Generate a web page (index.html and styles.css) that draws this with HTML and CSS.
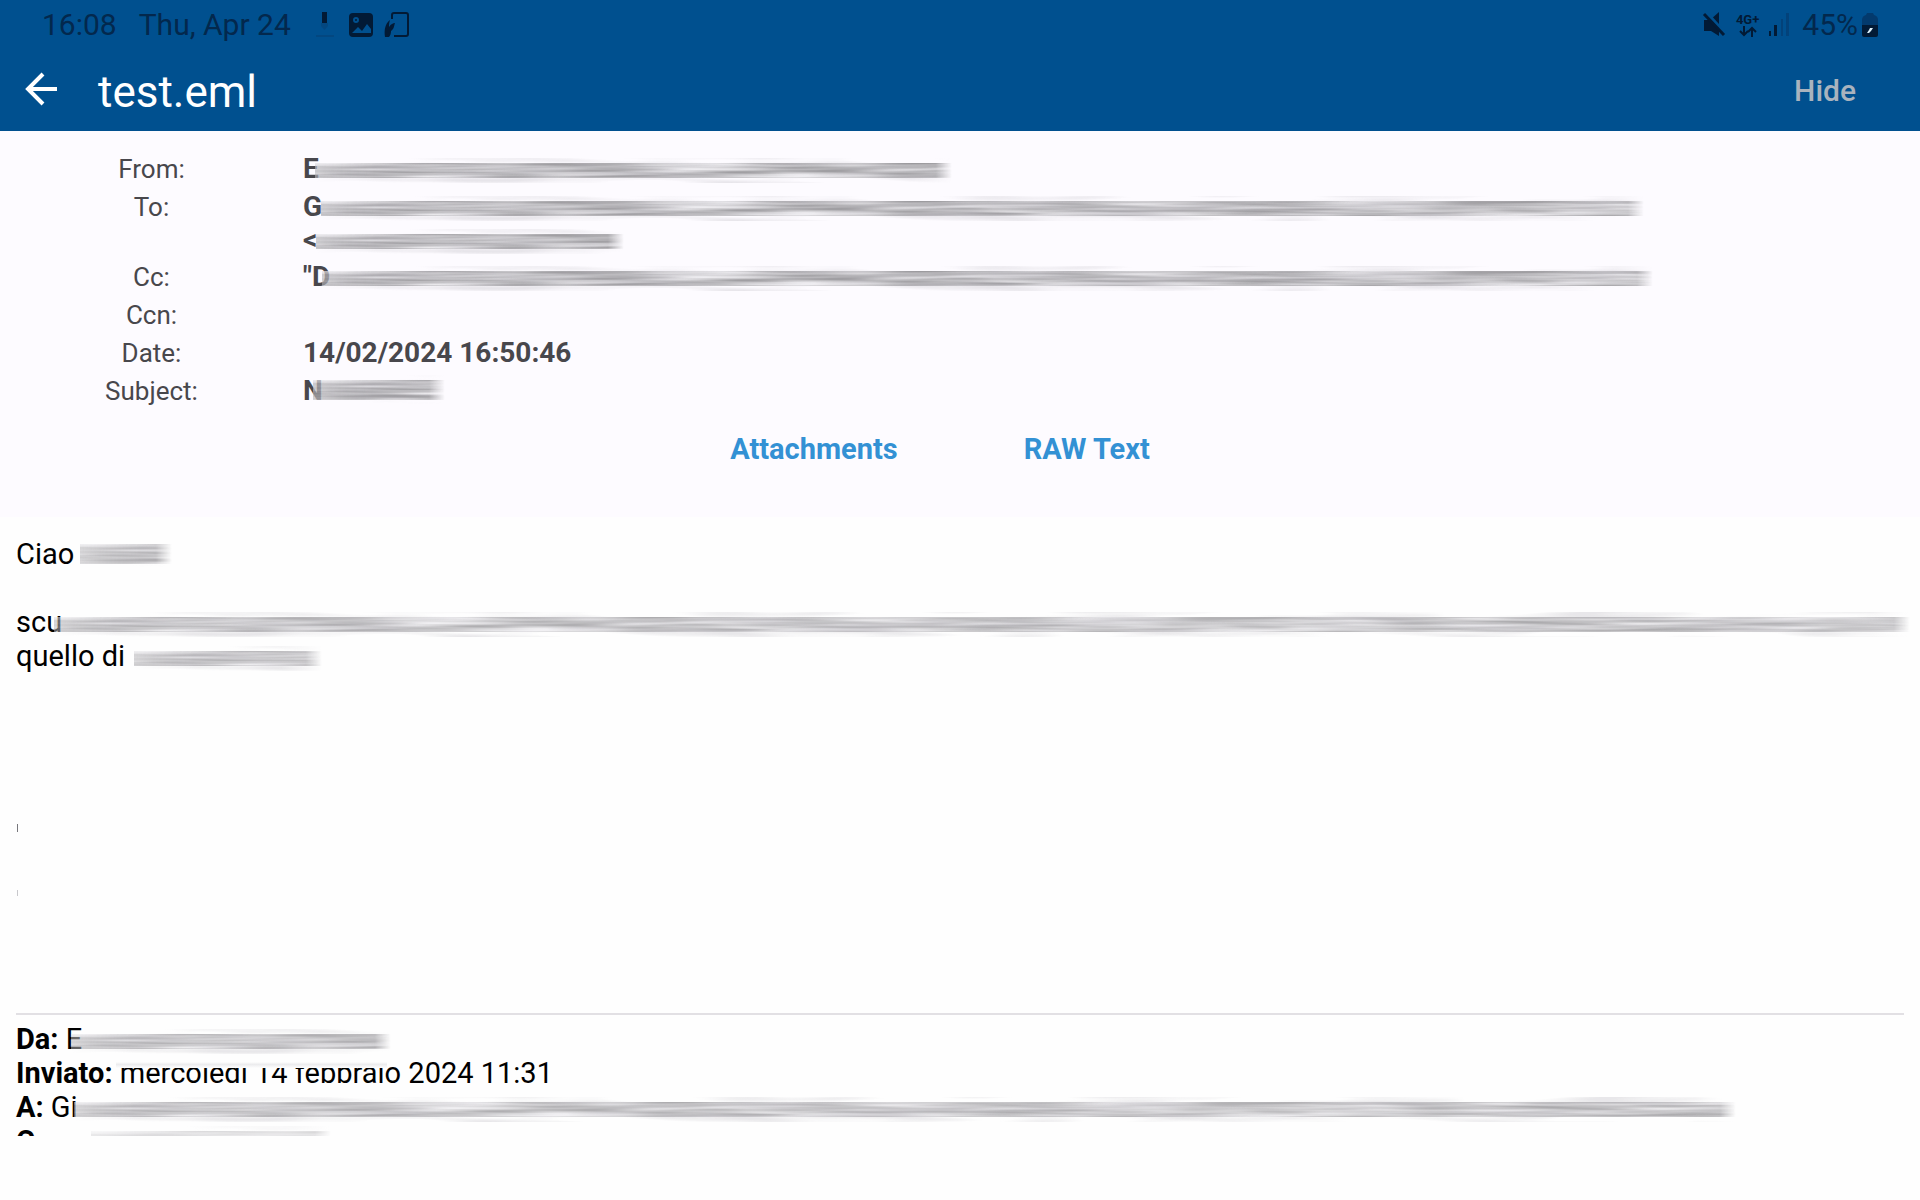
FILE: index.html
```html
<!DOCTYPE html>
<html lang="en">
<head>
  <meta charset="UTF-8">
  <meta name="viewport" content="width=device-width, initial-scale=1.0">
  <title>test.eml</title>
  <link rel="stylesheet" href="styles.css">
</head>
<body>
  <!-- filters for the smudged text -->
  <svg class="defs" width="0" height="0" aria-hidden="true">
    <filter id="streak" x="0" y="0" width="100%" height="100%" color-interpolation-filters="sRGB">
      <feTurbulence type="fractalNoise" baseFrequency="0.009 0.26" numOctaves="2" seed="4"/>
      <feColorMatrix values="0.6 0 0 0 0.43  0.6 0 0 0 0.425  0.6 0 0 0 0.44  0 0 0 0 1"/>
      <feComposite in2="SourceGraphic" operator="in"/>
    </filter>
    <filter id="halo" x="0" y="0" width="100%" height="100%" color-interpolation-filters="sRGB">
      <feTurbulence type="fractalNoise" baseFrequency="0.008 0.12" numOctaves="2" seed="9"/>
      <feColorMatrix values="0 0 0 0 0.72  0 0 0 0 0.71  0 0 0 0 0.74  3 0 0 0 -1.3"/>
      <feComposite in2="SourceGraphic" operator="in"/>
    </filter>
  </svg>

  <header class="top">
    <div class="status">
      <span class="clock">16:08</span>
      <span class="day">Thu, Apr 24</span>
      <svg class="ico" width="28" height="28" viewBox="0 0 28 28">
        <path d="M11 1h5v11h-5z" fill="#021a35"/>
        <path d="M10 12h7v3l-3.500 4-3.500-4z" fill="#034780"/>
        <path d="M5 25h18" stroke="#034780" stroke-width="2"/>
      </svg>
      <svg class="ico" width="28" height="28" viewBox="0 0 28 28">
        <rect x="2" y="2" width="24" height="24" rx="4" fill="#021a35"/>
        <circle cx="9" cy="9" r="2" fill="none" stroke="#00508f" stroke-width="2"/>
        <path d="M5 22l6-6 4 4 5-7 4 5v4z" fill="#00508f"/>
      </svg>
      <svg class="ico" width="28" height="28" viewBox="0 0 28 28">
        <path d="M9 8V4q0-2 2-2h12q2 0 2 2v19q0 2-2 2H11" fill="none" stroke="#021a35" stroke-width="2"/>
        <path d="M2 26c-1-7 0-13 5-17-1 3-1 5-1 7 2-3 4-4 6-4-1 3-1 6-4 8 0 3-1 5-2 6z" fill="#021a35"/>
      </svg>
      <div class="right">
        <svg class="mute" width="24" height="26" viewBox="0 0 24 26">
          <path d="M2 8h6l9-8v24l-8-5H2z" fill="#021a35"/>
          <path d="M5 1l19 21" stroke="#00508f" stroke-width="3"/>
          <path d="M2 2l20 21" stroke="#021a35" stroke-width="3"/>
        </svg>
        <span class="net">4G+
          <svg width="18" height="11" viewBox="0 0 18 11" fill="none" stroke="#021a35" stroke-width="2"><path d="M5 0v9M1 5l4 4 4-4M13 11V2M9 6l4-4 4 4"/></svg>
        </span>
        <svg class="signal" width="22" height="24" viewBox="0 0 22 24">
          <path d="M1 18h2v5H1zM6 12h3v11H6z" fill="#021a35"/>
          <path d="M13 6h2v17h-2zM18 0h3v23h-3z" fill="#03427a"/>
        </svg>
        <span class="pct">45%</span>
        <svg class="bat" width="16" height="25" viewBox="0 0 16 25">
          <path d="M0 12V7q0-4 4-5l1-2h6l1 2q4 1 4 5v5z" fill="#033a6d"/>
          <path d="M0 12h16v10q0 2-2 2H2q-2 0-2-2z" fill="#021a35"/>
          <path d="M5 20l2-3 1-2h3l-2 3-2 2z" fill="#dff2fb"/>
        </svg>
      </div>
    </div>
    <div class="bar">
      <button class="back" type="button" aria-label="Back">
        <svg width="34" height="34" viewBox="0 0 34 34" fill="none" stroke="#fff" stroke-width="4"><path d="M33 17H4M19 2L4 17l15 15"/></svg>
      </button>
      <h1>test.eml</h1>
      <button class="hide" type="button">Hide</button>
    </div>
  </header>

  <section class="info">
    <dl>
      <dt>From:</dt>
      <dd>E<span class="smear s-from"></span></dd>
      <dt>To:</dt>
      <dd>G<span class="smear s-to"></span><br>&lt;<span class="smear s-to2"></span></dd>
      <dt>Cc:</dt>
      <dd>"D<span class="smear s-cc"></span></dd>
      <dt>Ccn:</dt>
      <dd>&nbsp;</dd>
      <dt>Date:</dt>
      <dd>14/02/2024 16:50:46</dd>
      <dt>Subject:</dt>
      <dd>N<span class="smear tall s-subj"></span></dd>
    </dl>
    <div class="actions">
      <button type="button">Attachments</button>
      <button type="button">RAW Text</button>
    </div>
  </section>

  <main class="mail">
    <p>Ciao<span class="smear tall s-ciao"></span></p>
    <p class="empty"></p>
    <p>scu<span class="smear s-scu"></span></p>
    <p>quello di<span class="smear s-quello"></span></p>
    <div class="gap">
      <i class="speck"></i>
      <i class="speck light"></i>
    </div>
    <hr>
    <p><b>Da:</b> E<span class="smear s-da"></span></p>
    <p><b>Inviato:</b> <span class="cut">mercoledì 14 febbraio</span> 2024 11:31</p>
    <p><b>A:</b> Gi<span class="smear s-a"></span></p>
    <p><b>C</b><span class="smear tall s-c"></span></p>
  </main>
</body>
</html>
```
FILE: styles.css
```css
*{margin:0;padding:0;box-sizing:border-box;}
body{height:100vh;display:flex;flex-direction:column;background:#fefefe;font-family:Roboto,"Liberation Sans",sans-serif;overflow:hidden;}
button{border:0;background:none;font-family:inherit;cursor:pointer;}
.defs{position:absolute;}

/* status bar + title */
.top{background:#00508f;flex:none;}
.status{height:50px;padding:0 42px;display:flex;align-items:center;color:#03284d;font-size:30px;line-height:50px;}
.day{margin:0 20px 0 22px;}
.ico{margin-right:8px;flex:none;}
.right{margin-left:auto;display:flex;align-items:center;}
.net{display:flex;flex-direction:column;align-items:center;font-size:13px;line-height:13px;font-weight:700;color:#021a35;margin:0 9px 0 10px;}
.signal{margin-right:12px;}
.bat{margin-left:4px;}
.bar{height:81px;padding:0 64px 0 24px;display:flex;align-items:center;}
.back{width:34px;height:34px;margin-bottom:4px;}
.back svg{display:block;}
.bar h1{font-size:44px;line-height:52px;font-weight:400;color:#fff;margin-left:40px;padding-top:2px;}
.hide{margin-left:auto;font-size:30px;line-height:34px;font-weight:500;color:#a9b3be;}

/* mail headers */
.info{background:#fdfbff;padding:21px 0 51px;flex:none;}
.info dl{display:grid;grid-template-columns:303px 1fr;row-gap:4px;align-items:baseline;color:#48474c;line-height:33px;}
.info dt{text-align:center;font-size:26px;}
.info dd{font-size:28px;font-weight:700;white-space:nowrap;}
.actions{display:flex;justify-content:center;gap:126px;padding:24px 40px 0 0;}
.actions button{font-size:29px;line-height:34px;font-weight:700;color:#3391d4;}

/* message text */
.mail{flex:1;min-height:0;overflow:hidden;margin-bottom:64px;padding:20px 16px 0;color:#000;font-size:29px;line-height:34px;}
.mail p{height:34px;white-space:nowrap;}
.gap{height:340px;padding-top:151px;}
.speck{display:block;width:1px;height:8px;margin:0 0 58px 1px;background:#77777c;}
.speck.light{height:6px;background:#c8c8cc;}
.mail hr{border:0;height:2px;background:#e2e0e4;margin-bottom:7px;}
.cut{position:relative;}
.cut::before{content:"";position:absolute;left:-4px;right:14px;top:0;height:12px;background:linear-gradient(#fefefe 50%,#ececee 70%,#fefefe);}

/* smudges over private text */
.smear{display:inline-block;position:relative;height:15px;max-width:100%;}
.smear::before,.smear::after{content:"";position:absolute;left:0;right:0;background:#000;}
.smear::before{top:0;bottom:0;filter:url(#streak);-webkit-mask:linear-gradient(90deg,rgba(0,0,0,.8),#000 60px,#000 calc(100% - 16px),transparent);mask:linear-gradient(90deg,rgba(0,0,0,.8),#000 60px,#000 calc(100% - 16px),transparent);}
.smear::after{top:-5px;bottom:-5px;filter:url(#halo);opacity:.3;-webkit-mask:linear-gradient(90deg,transparent,#000 60px,#000 calc(100% - 40px),transparent);mask:linear-gradient(90deg,transparent,#000 60px,#000 calc(100% - 40px),transparent);}
.tall{height:20px;}
.info .smear::before{opacity:.85;}
.mail .smear::before{opacity:.7;}
.s-from{width:637px;margin-left:-4px;}
.s-to{width:1323px;margin-left:-1px;}
.s-to2{width:308px;margin-left:-1px;}
.s-cc{width:1331px;margin-left:-8px;}
.s-subj{width:132px;margin-left:-10px;}
.s-ciao{width:92px;margin-left:6px;}
.s-scu{width:1856px;margin-left:-8px;}
.s-quello{width:188px;margin-left:9px;}
.s-da{width:320px;margin-left:-11px;}
.s-a{width:1662px;margin-left:-4px;}
.s-c{width:240px;margin-left:56px;opacity:.5;}
```
